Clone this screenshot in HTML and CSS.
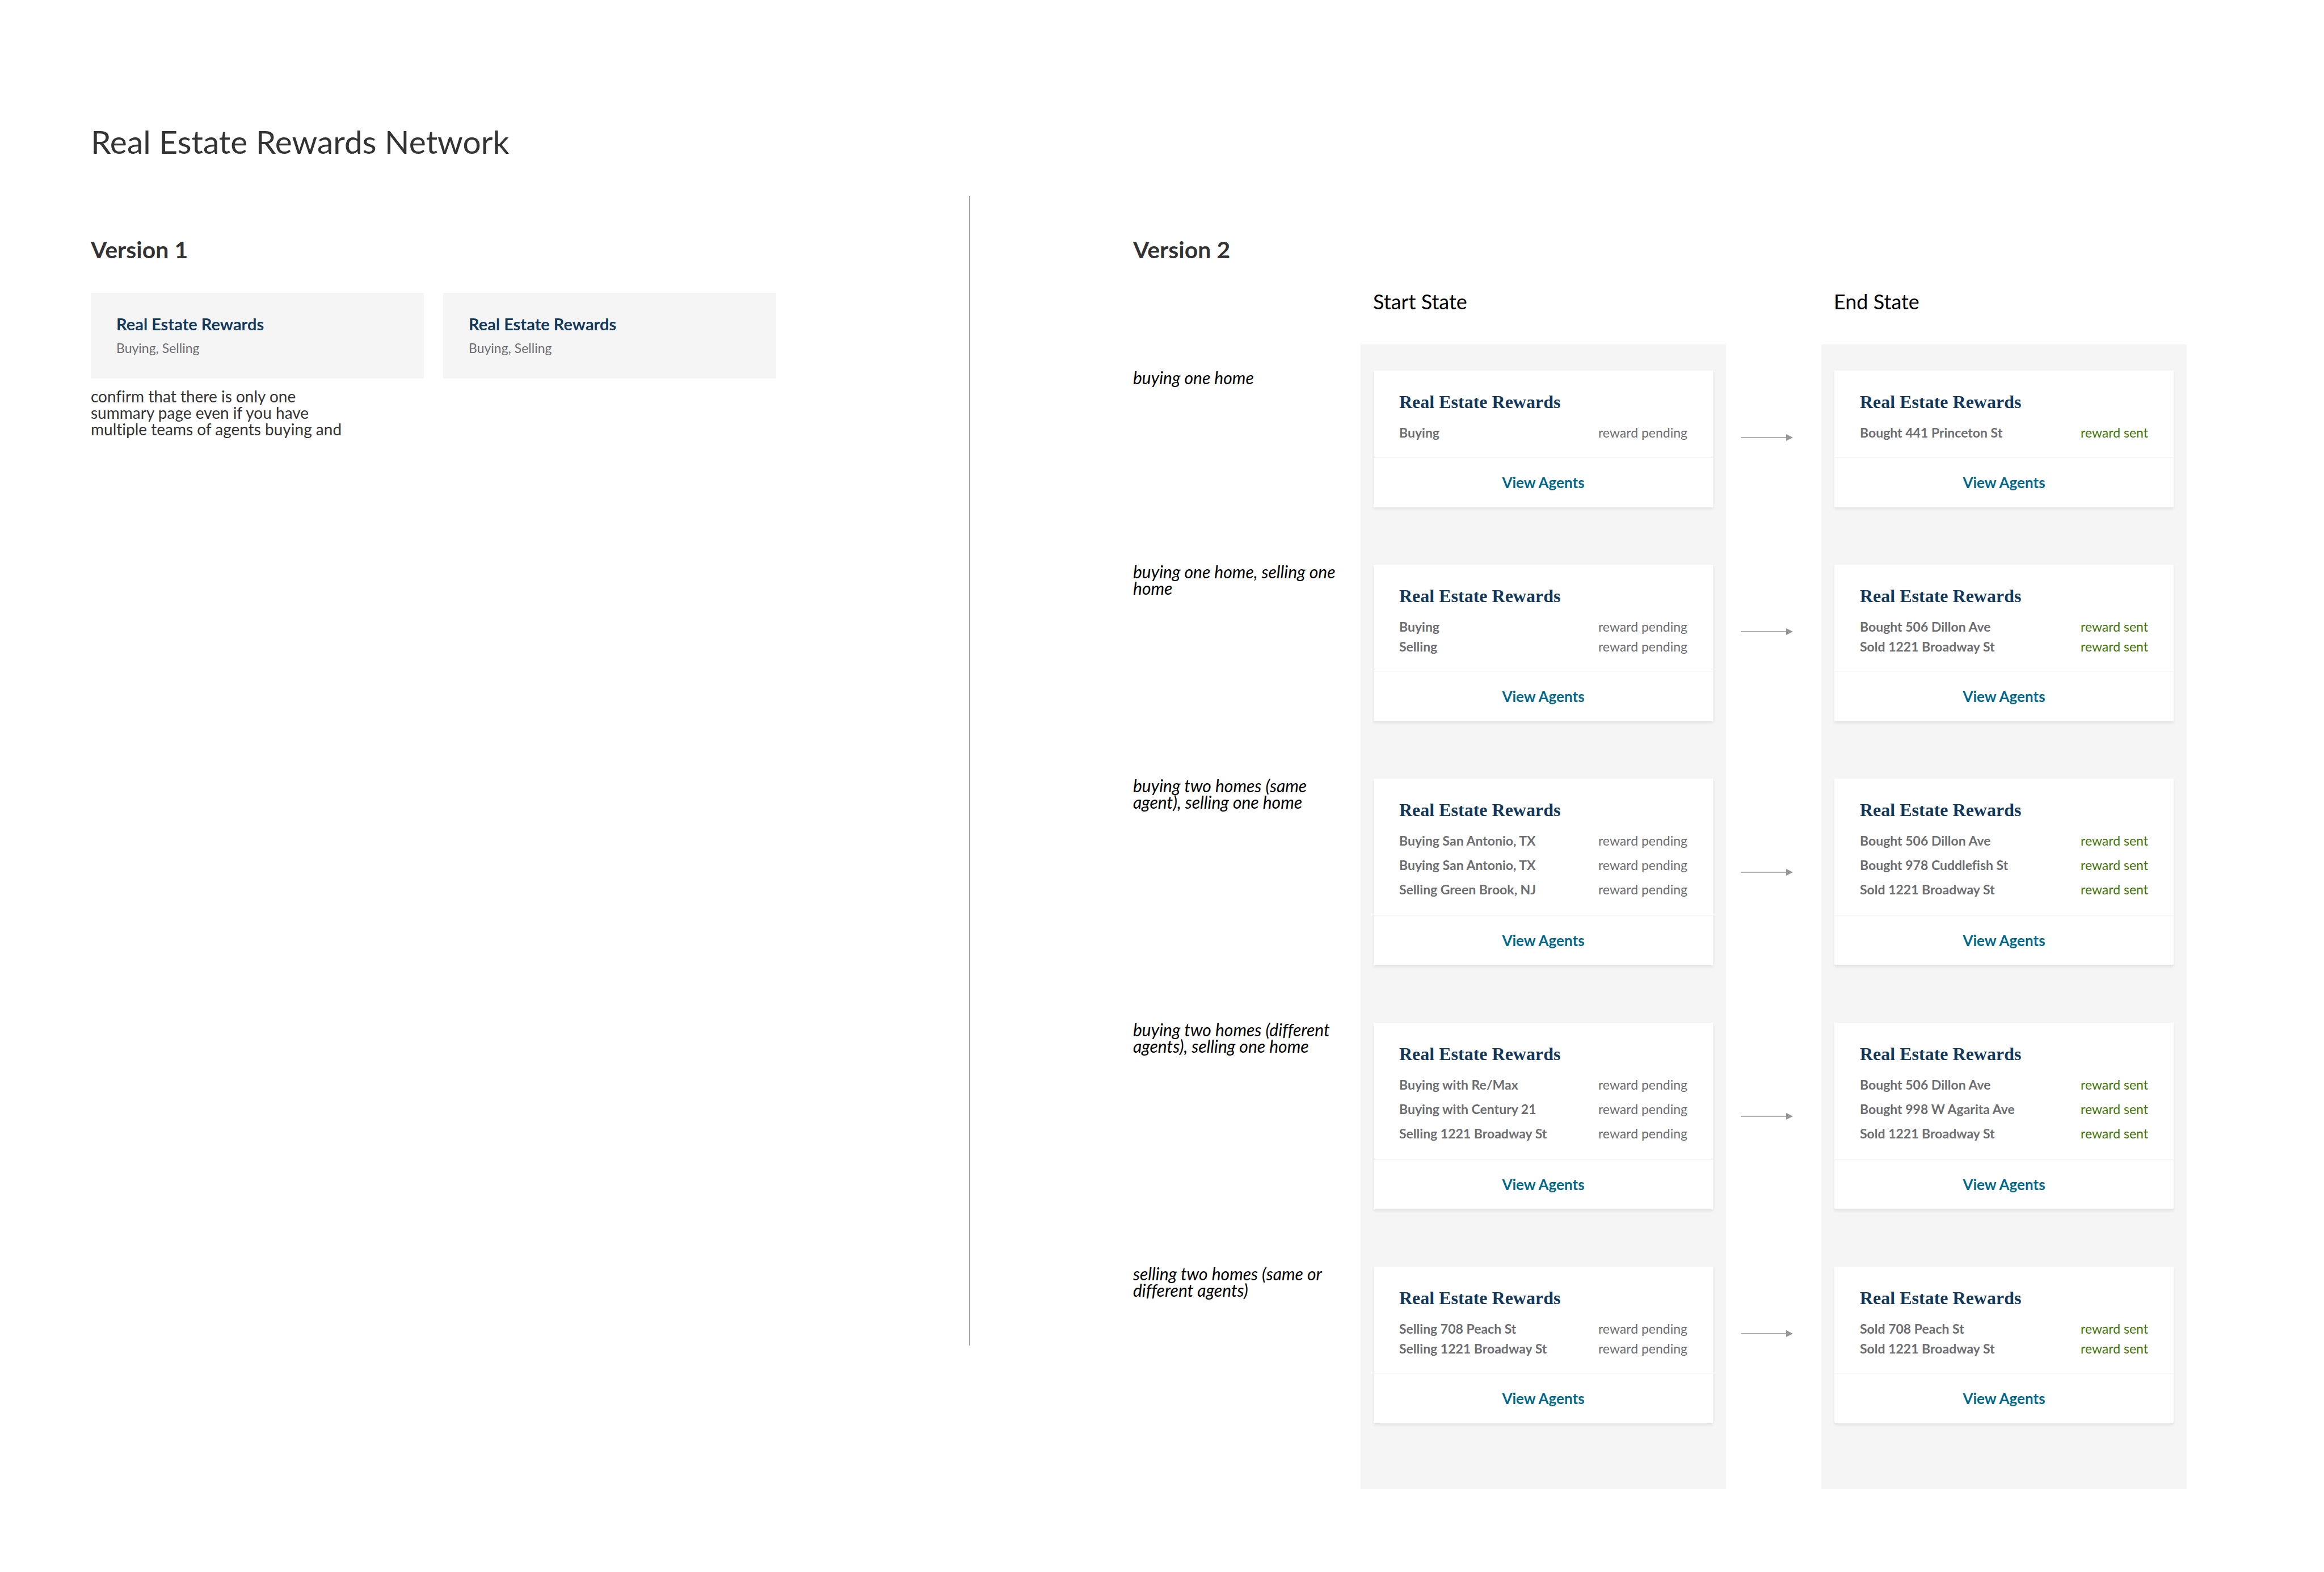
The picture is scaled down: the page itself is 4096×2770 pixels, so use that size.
FILE: index.html
```html
<!DOCTYPE html>
<html lang="en">
<head>
<meta charset="utf-8">
<meta name="viewport" content="width=device-width, initial-scale=1">
<title>Real Estate Rewards Network</title>
<link rel="stylesheet" href="styles.css">
</head>
<body>
<svg class="symbols" aria-hidden="true">
  <symbol id="arrow" viewBox="0 0 92 12">
    <path d="M0 6H81" stroke="#979797" stroke-width="1.5" fill="none"/>
    <path d="M80 0L92 6L80 12Z" fill="#979797"/>
  </symbol>
</svg>

<h1 class="page-title">Real Estate Rewards Network</h1>

<main class="versions">
  <section class="version version-one">
    <h2 class="version-title">Version 1</h2>
    <div class="tiles">
      <article class="tile">
        <h3 class="tile-title">Real Estate Rewards</h3>
        <p class="tile-text">Buying, Selling</p>
      </article>
      <article class="tile">
        <h3 class="tile-title">Real Estate Rewards</h3>
        <p class="tile-text">Buying, Selling</p>
      </article>
    </div>
    <p class="note">confirm that there is only one summary page even if you have multiple teams of agents buying and</p>
  </section>

  <div class="divider"></div>

  <section class="version version-two">
    <h2 class="version-title">Version 2</h2>

    <div class="scenario scenario-head">
      <h3 class="state-title state-start">Start State</h3>
      <h3 class="state-title state-end">End State</h3>
    </div>

    <div class="scenario">
      <p class="label">buying one home</p>
      <div class="state">
        <article class="card">
          <div class="card-body">
            <h4 class="card-title">Real Estate Rewards</h4>
            <dl class="rewards">
              <div class="reward"><dt>Buying</dt><dd>reward pending</dd></div>
            </dl>
          </div>
          <a class="card-link" href="#">View Agents</a>
        </article>
      </div>
      <div class="step"><svg class="arrow" aria-hidden="true"><use href="#arrow"/></svg></div>
      <div class="state">
        <article class="card">
          <div class="card-body">
            <h4 class="card-title">Real Estate Rewards</h4>
            <dl class="rewards sent">
              <div class="reward"><dt>Bought 441 Princeton St</dt><dd>reward sent</dd></div>
            </dl>
          </div>
          <a class="card-link" href="#">View Agents</a>
        </article>
      </div>
    </div>

    <div class="scenario">
      <p class="label">buying one home, selling one home</p>
      <div class="state">
        <article class="card">
          <div class="card-body">
            <h4 class="card-title">Real Estate Rewards</h4>
            <dl class="rewards">
              <div class="reward"><dt>Buying</dt><dd>reward pending</dd></div>
              <div class="reward"><dt>Selling</dt><dd>reward pending</dd></div>
            </dl>
          </div>
          <a class="card-link" href="#">View Agents</a>
        </article>
      </div>
      <div class="step"><svg class="arrow" aria-hidden="true"><use href="#arrow"/></svg></div>
      <div class="state">
        <article class="card">
          <div class="card-body">
            <h4 class="card-title">Real Estate Rewards</h4>
            <dl class="rewards sent">
              <div class="reward"><dt>Bought 506 Dillon Ave</dt><dd>reward sent</dd></div>
              <div class="reward"><dt>Sold 1221 Broadway St</dt><dd>reward sent</dd></div>
            </dl>
          </div>
          <a class="card-link" href="#">View Agents</a>
        </article>
      </div>
    </div>

    <div class="scenario scenario-tall">
      <p class="label">buying two homes (same agent), selling one home</p>
      <div class="state">
        <article class="card">
          <div class="card-body">
            <h4 class="card-title">Real Estate Rewards</h4>
            <dl class="rewards">
              <div class="reward"><dt>Buying San Antonio, TX</dt><dd>reward pending</dd></div>
              <div class="reward"><dt>Buying San Antonio, TX</dt><dd>reward pending</dd></div>
              <div class="reward"><dt>Selling Green Brook, NJ</dt><dd>reward pending</dd></div>
            </dl>
          </div>
          <a class="card-link" href="#">View Agents</a>
        </article>
      </div>
      <div class="step"><svg class="arrow" aria-hidden="true"><use href="#arrow"/></svg></div>
      <div class="state">
        <article class="card">
          <div class="card-body">
            <h4 class="card-title">Real Estate Rewards</h4>
            <dl class="rewards sent">
              <div class="reward"><dt>Bought 506 Dillon Ave</dt><dd>reward sent</dd></div>
              <div class="reward"><dt>Bought 978 Cuddlefish St</dt><dd>reward sent</dd></div>
              <div class="reward"><dt>Sold 1221 Broadway St</dt><dd>reward sent</dd></div>
            </dl>
          </div>
          <a class="card-link" href="#">View Agents</a>
        </article>
      </div>
    </div>

    <div class="scenario scenario-tall">
      <p class="label">buying two homes (different agents), selling one home</p>
      <div class="state">
        <article class="card">
          <div class="card-body">
            <h4 class="card-title">Real Estate Rewards</h4>
            <dl class="rewards">
              <div class="reward"><dt>Buying with Re/Max</dt><dd>reward pending</dd></div>
              <div class="reward"><dt>Buying with Century 21</dt><dd>reward pending</dd></div>
              <div class="reward"><dt>Selling 1221 Broadway St</dt><dd>reward pending</dd></div>
            </dl>
          </div>
          <a class="card-link" href="#">View Agents</a>
        </article>
      </div>
      <div class="step"><svg class="arrow" aria-hidden="true"><use href="#arrow"/></svg></div>
      <div class="state">
        <article class="card">
          <div class="card-body">
            <h4 class="card-title">Real Estate Rewards</h4>
            <dl class="rewards sent">
              <div class="reward"><dt>Bought 506 Dillon Ave</dt><dd>reward sent</dd></div>
              <div class="reward"><dt>Bought 998 W Agarita Ave</dt><dd>reward sent</dd></div>
              <div class="reward"><dt>Sold 1221 Broadway St</dt><dd>reward sent</dd></div>
            </dl>
          </div>
          <a class="card-link" href="#">View Agents</a>
        </article>
      </div>
    </div>

    <div class="scenario scenario-last">
      <p class="label">selling two homes (same or different agents)</p>
      <div class="state">
        <article class="card">
          <div class="card-body">
            <h4 class="card-title">Real Estate Rewards</h4>
            <dl class="rewards">
              <div class="reward"><dt>Selling 708 Peach St</dt><dd>reward pending</dd></div>
              <div class="reward"><dt>Selling 1221 Broadway St</dt><dd>reward pending</dd></div>
            </dl>
          </div>
          <a class="card-link" href="#">View Agents</a>
        </article>
      </div>
      <div class="step"><svg class="arrow" aria-hidden="true"><use href="#arrow"/></svg></div>
      <div class="state">
        <article class="card">
          <div class="card-body">
            <h4 class="card-title">Real Estate Rewards</h4>
            <dl class="rewards sent">
              <div class="reward"><dt>Sold 708 Peach St</dt><dd>reward sent</dd></div>
              <div class="reward"><dt>Sold 1221 Broadway St</dt><dd>reward sent</dd></div>
            </dl>
          </div>
          <a class="card-link" href="#">View Agents</a>
        </article>
      </div>
    </div>
  </section>
</main>
</body>
</html>
```
FILE: styles.css
```css
*,
*::before,
*::after {
  box-sizing: border-box;
}

body {
  margin: 0;
  padding: 215px 242px 0 160px;
  background: #fff;
  color: #333;
  font-family: Lato, "Liberation Sans", sans-serif;
  font-variant-ligatures: none;
}

h1, h2, h3, h4, p, dl, dd {
  margin: 0;
}

.symbols {
  display: none;
}

.page-title {
  margin-bottom: 62px;
  font-size: 57px;
  font-weight: 400;
  line-height: 68px;
}

.versions {
  display: grid;
  grid-template-columns: 1548fr 2px 2144fr;
}

.version {
  padding-top: 71px;
}

.version-one {
  padding-right: 340px;
}

.version-two {
  padding-left: 287px;
}

.divider {
  margin-bottom: 253px;
  background: #a8a8a8;
}

.version-title {
  font-size: 41px;
  font-weight: 700;
  line-height: 48px;
}

/* Version 1 */

.tiles {
  display: grid;
  grid-template-columns: 1fr 1fr;
  gap: 34px;
  margin-top: 52px;
}

.tile {
  padding: 38px 45px 40px;
  background: #f5f5f5;
}

.tile-title {
  color: #12395b;
  font-size: 29px;
  font-weight: 700;
  line-height: 34px;
}

.tile-text {
  margin-top: 11px;
  color: #6d6e71;
  font-size: 23px;
  line-height: 28px;
}

.note {
  max-width: 460px;
  margin-top: 17px;
  font-size: 28px;
  line-height: 29px;
}

/* Version 2: label, start state, arrow, end state */

.scenario {
  display: grid;
  grid-template-columns: 401fr 644fr 168fr 644fr;
}

.scenario-head {
  margin-top: 46px;
  padding-bottom: 55px;
  color: #000;
}

.state-title {
  padding-left: 22px;
  font-size: 36px;
  font-weight: 400;
  line-height: 42px;
}

.state-start {
  grid-column: 2;
}

.state-end {
  grid-column: 4;
}

.label {
  padding: 44px 24px 0 0;
  color: #000;
  font-size: 30px;
  font-style: italic;
  line-height: 29px;
}

.state {
  padding: 46px 23px 55px;
  background: #f5f5f5;
}

.scenario-last .state {
  padding-bottom: 116px;
}

.step {
  padding: 158px 0 0 26px;
}

.scenario-tall .step {
  padding-top: 205px;
}

.arrow {
  display: block;
  width: 92px;
  height: 12px;
}

.card {
  background: #fff;
  box-shadow: 0 3px 5px rgba(0, 0, 0, 0.08);
}

.card-body {
  padding: 36px 45px 29px;
}

.scenario-tall .card-body {
  padding-bottom: 31px;
}

.card-title {
  color: #12395b;
  font-family: "Liberation Serif", serif;
  font-size: 32px;
  font-weight: 700;
  line-height: 38px;
}

.rewards {
  display: grid;
  gap: 7px;
  margin-top: 21px;
  color: #6d6e71;
  font-size: 23px;
  line-height: 28px;
}

.scenario-tall .rewards {
  gap: 15px;
}

.reward {
  display: flex;
  justify-content: space-between;
}

.reward dt {
  font-weight: 700;
}

.sent dd {
  color: #417505;
}

.card-link {
  display: block;
  padding: 29px 0;
  border-top: 1px solid #e6e6e6;
  color: #00698c;
  font-size: 26px;
  font-weight: 700;
  line-height: 30px;
  text-align: center;
  text-decoration: none;
}
```
